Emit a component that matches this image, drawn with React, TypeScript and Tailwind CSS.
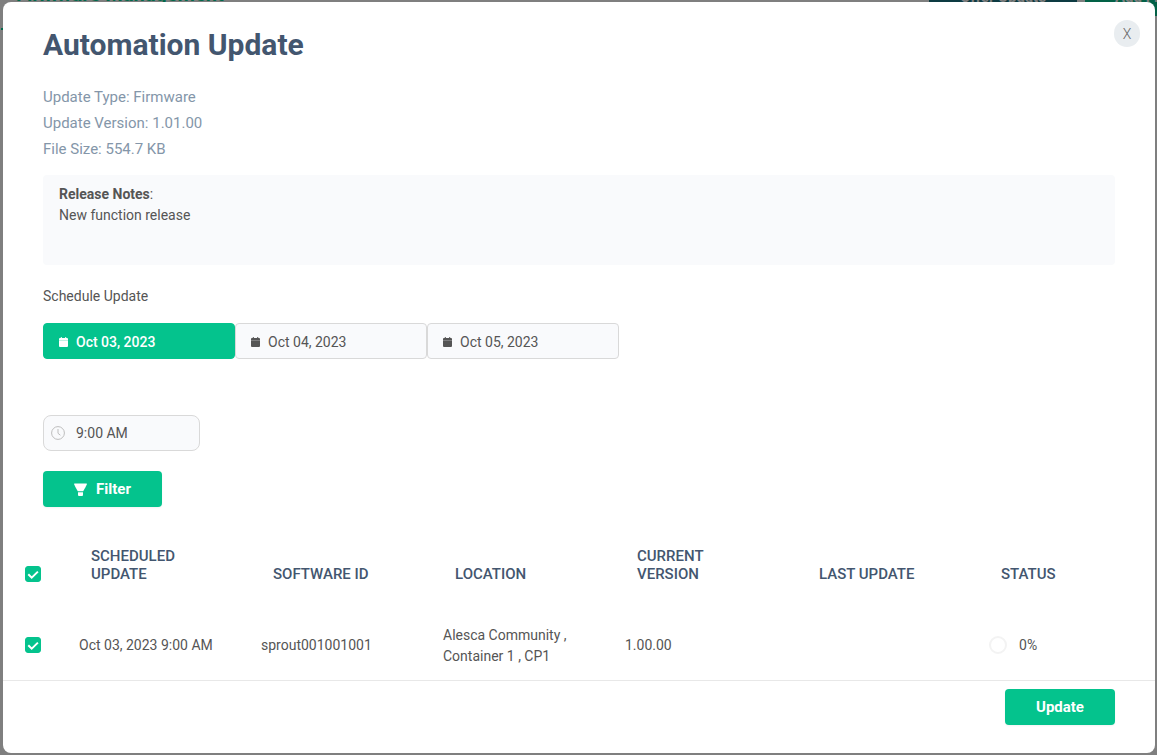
import React, { useState } from 'react';

const DATES = ['Oct 03, 2023', 'Oct 04, 2023', 'Oct 05, 2023'];
const COLUMNS = ['Scheduled Update', 'Software ID', 'Location', 'Current Version', 'Last Update', 'Status'];

interface Device {
  id: string;
  scheduled: string;
  location: string;
  version: string;
  lastUpdate: string;
  progress: number;
}

const DEVICES: Device[] = [
  {
    id: 'sprout001001001',
    scheduled: 'Oct 03, 2023 9:00 AM',
    location: 'Alesca Community , Container 1 , CP1',
    version: '1.00.00',
    lastUpdate: '',
    progress: 0,
  },
];

function CalendarIcon() {
  return (
    <svg className="h-[10px] w-[9px] shrink-0" viewBox="0 0 9 10" fill="currentColor" aria-hidden="true">
      <path d="M1.8 0h1v1h3.4V0h1v1H8a1 1 0 0 1 1 1v1H0V2a1 1 0 0 1 1-1h.8zM0 3.3h9V9a1 1 0 0 1-1 1H1a1 1 0 0 1-1-1z" />
    </svg>
  );
}

function ClockIcon() {
  return (
    <svg className="h-[14px] w-[14px] shrink-0 text-[#bdbdbd]" viewBox="0 0 14 14" fill="none" stroke="currentColor" aria-hidden="true">
      <circle cx="7" cy="7" r="6.4" />
      <path d="M7 3v4.3l2.4 1.9" />
    </svg>
  );
}

function FilterIcon() {
  return (
    <svg className="h-[13px] w-[13px] shrink-0" viewBox="0 0 13 13" fill="currentColor" aria-hidden="true">
      <path d="M.5.5h12q.6.1.4.7L11.6 4 9.2 8.2H3.8L1.4 4 .1 1.2Q-.1.6.5.5z" />
      <path d="M4 9.2h5V12a1 1 0 0 1-1 1H5a1 1 0 0 1-1-1z" />
    </svg>
  );
}

function Tick({ label, checked, onChange }: { label: string; checked: boolean; onChange: (v: boolean) => void }) {
  return (
    <label className="grid h-4 w-4 cursor-pointer">
      <input
        type="checkbox"
        aria-label={label}
        checked={checked}
        onChange={(e) => onChange(e.target.checked)}
        className="peer col-start-1 row-start-1 h-4 w-4 appearance-none rounded-[3px] border border-[#d9d9d9] bg-white checked:border-[#04c38d] checked:bg-[#04c38d]"
      />
      <svg className="pointer-events-none invisible col-start-1 row-start-1 h-4 w-4 peer-checked:visible" viewBox="0 0 16 16" fill="none" stroke="#fff" strokeWidth="2" aria-hidden="true">
        <path d="M3.3 8.2l3.4 3.4 6.2-6" />
      </svg>
    </label>
  );
}

export default function App() {
  const [date, setDate] = useState(DATES[0]);
  const [time, setTime] = useState('9:00 AM');
  const [selected, setSelected] = useState<string[]>(DEVICES.map((d) => d.id));

  const toggle = (id: string, on: boolean) => {
    setSelected(on ? [...selected, id] : selected.filter((s) => s !== id));
  };

  return (
    <div className="relative flex min-h-screen overflow-hidden bg-[#7f7f7f] py-[2px] pl-[3px] pr-[2px] font-[Roboto,sans-serif] text-sm leading-[21px] text-[#555]">
      {/* page under the dialog */}
      <div className="absolute inset-x-0 top-0" aria-hidden="true">
        <div className="flex h-7 items-start justify-between pl-4">
          <div className="-mt-5 text-xl leading-7 font-bold text-[#02694b]">Firmware Management</div>
          <div className="-mt-5 flex gap-2 text-[15px] leading-4 font-bold text-[#7f7f7f]">
            <div className="h-9 w-[148px] bg-[#0d3b42] pt-[9px] text-center">Offer Update</div>
            <div className="h-9 w-[72px] overflow-hidden bg-[#026146] pt-[9px] pl-[30px] whitespace-nowrap">Add Firmware</div>
          </div>
        </div>
        <div className="ml-px h-[2px] w-40 bg-[#02694b]" />
      </div>

      <div role="dialog" aria-labelledby="dialog-title" className="relative flex min-w-0 flex-1 flex-col overflow-hidden rounded-lg bg-white">
        <div className="flex items-start justify-between pt-[18px] pr-[15px] pl-10">
          <h1 id="dialog-title" className="pt-[7px] text-3xl leading-9 font-bold text-[#43566f]">Automation Update</h1>
          <button aria-label="Close" className="h-[27px] w-[26px] rounded-full bg-[#e9edf0] text-sm leading-7 font-light text-[#666]">X</button>
        </div>

        <div className="flex-1">
          <div className="px-10">
            <div className="pt-[21px] text-[15px] leading-[26px] text-[#8496a9]">
              <p>Update Type: Firmware</p>
              <p>Update Version: 1.01.00</p>
              <p>File Size: 554.7 KB</p>
            </div>

            <div className="mt-[13px] min-h-[90px] rounded bg-[#f9fafc] px-4 py-[9px]">
              <p><b>Release Notes</b>:</p>
              <p>New function release</p>
            </div>

            <p className="mt-[21px]">Schedule Update</p>

            <div className="mt-4 flex">
              {DATES.map((d) => (
                <button
                  key={d}
                  aria-pressed={d === date}
                  onClick={() => setDate(d)}
                  className={`flex h-9 w-48 items-center gap-2 rounded border px-[15px] pt-[2px] ${d === date ? 'border-[#04c38d] bg-[#04c38d] font-medium text-white' : 'border-[#d9d9d9] bg-[#f9fafc]'}`}
                >
                  <CalendarIcon />
                  {d}
                </button>
              ))}
            </div>

            <label className="mt-14 flex h-9 w-[157px] items-center gap-[11px] rounded-lg border border-[#d9d9d9] bg-[#f9fafc] px-[7px]">
              <ClockIcon />
              <input type="text" aria-label="Time" value={time} onChange={(e) => setTime(e.target.value)} className="w-full min-w-0 bg-transparent outline-none" />
            </label>

            <button className="mt-5 flex h-9 w-[119px] items-center justify-center gap-[9px] rounded bg-[#04c38d] text-[15px] font-bold text-white shadow-xs">
              <FilterIcon />
              Filter
            </button>
          </div>

          <table className="mt-10 w-full table-fixed text-left">
            <thead className="text-[15px] leading-[18px] text-[#43566f] uppercase">
              <tr className="align-bottom">
                <th className="w-[60px] pb-[41px] pl-[22px]">
                  <Tick label="Select all" checked={selected.length === DEVICES.length} onChange={(on) => setSelected(on ? DEVICES.map((d) => d.id) : [])} />
                </th>
                {COLUMNS.map((c) => (
                  <th key={c} className="px-7 pb-10 font-medium">{c}</th>
                ))}
              </tr>
            </thead>
            <tbody>
              {DEVICES.map((d) => (
                <tr key={d.id}>
                  <td className="pl-[22px]">
                    <Tick label={`Select ${d.id}`} checked={selected.includes(d.id)} onChange={(on) => toggle(d.id, on)} />
                  </td>
                  <td className="px-4">{d.scheduled}</td>
                  <td className="px-4">{d.id}</td>
                  <td className="px-4 pt-[2px]">{d.location}</td>
                  <td className="px-4">{d.version}</td>
                  <td className="px-4">{d.lastUpdate}</td>
                  <td className="px-4">
                    <div className="flex items-center gap-3">
                      <span className="h-[18px] w-[18px] rounded-full border-2 border-[#f3f3f3]" />
                      {d.progress}%
                    </div>
                  </td>
                </tr>
              ))}
            </tbody>
          </table>
        </div>

        <div className="flex justify-end border-t border-[#e8e8e8] px-10 pt-2 pb-7">
          <button className="h-9 w-[110px] rounded bg-[#04c38d] text-[15px] font-bold text-white shadow-xs">Update</button>
        </div>
      </div>
    </div>
  );
}
